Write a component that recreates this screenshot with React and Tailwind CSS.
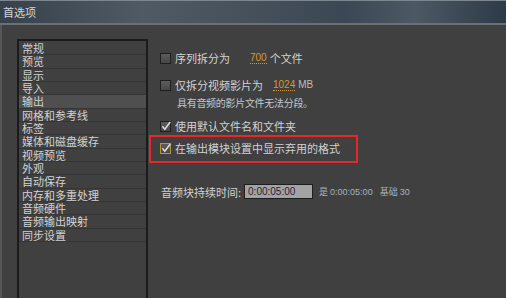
import React from "react";

const items = [
  "常规",
  "预览",
  "显示",
  "导入",
  "输出",
  "网格和参考线",
  "标签",
  "媒体和磁盘缓存",
  "视频预览",
  "外观",
  "自动保存",
  "内存和多重处理",
  "音频硬件",
  "音频输出映射",
  "同步设置",
];

function CheckBox({ checked, gold }) {
  return (
    <span
      className={
        "relative flex w-[11px] h-[11px] shrink-0 border bg-[linear-gradient(180deg,#5c5c5c,#474747)] " +
        (gold ? "border-[#b8943a]" : "border-[#1f1f1f]")
      }
    >
      {checked && (
        <svg viewBox="0 0 11 11" className="absolute -left-px -top-[2px] w-[12px] h-[12px]">
          <path d="M2.2 5.8 L4.4 8.4 L9.4 1.8" fill="none" stroke="#dcdcdc" strokeWidth="1.4" />
        </svg>
      )}
    </span>
  );
}

export default function App() {
  return (
    <div className="w-[506px] h-[298px] overflow-hidden flex flex-col bg-[#404040] text-[#d2d2d2] font-['Noto_Sans_CJK_SC','Noto_Sans',sans-serif]">
      {/* title bar */}
      <div className="h-[23px] shrink-0 flex items-center pl-[3px] border-t border-[#7d868e] bg-[linear-gradient(90deg,#36414c_0%,#4f5a65_28%,#45505b_50%,#3b4754_68%,#4c5864_82%,#2d3a47_100%)]">
        <span className="text-[11px] leading-[12px] text-[#cfd5da]">首选项</span>
      </div>
      <div className="h-[2px] shrink-0 bg-[#6b7075]" />

      <div className="flex flex-1 min-h-0">
        <div className="w-[2px] shrink-0 bg-[#575757]" />
        <div className="flex items-start pl-[15px] pt-[14px]">
          {/* category list */}
          <div className="w-[131px] h-[300px] border-2 border-b-0 border-[#1b1b1b] pt-[1px]">
            {items.map((name, i) => (
              <div
                key={name}
                className={
                  "h-[13.33px] pl-[3px] border-b border-[#353535] text-[11px] leading-[12px] whitespace-nowrap " +
                  (i === 4 ? "bg-[#4f4f4f]" : "")
                }
              >
                {name}
              </div>
            ))}
          </div>

          {/* settings */}
          <div className="flex flex-col ml-px text-[11px] leading-[12px]">
            <div className="flex items-center h-[12px] mt-[13px] pl-[11px]">
              <CheckBox />
              <span className="ml-[4px]">序列拆分为</span>
              <span className="ml-[20px] text-[10px] text-[#d49b2c] border-b border-dotted border-[#d49b2c] leading-[11px] font-['Liberation_Sans',sans-serif]">
                700
              </span>
              <span className="ml-[3px]">个文件</span>
            </div>

            <div className="flex items-center h-[12px] mt-[15px] pl-[11px]">
              <CheckBox />
              <span className="ml-[4px]">仅拆分视频影片为</span>
              <span className="ml-[10px] text-[10px] text-[#d49b2c] border-b border-dotted border-[#d49b2c] leading-[11px] font-['Liberation_Sans',sans-serif]">
                1024
              </span>
              <span className="ml-[3px] text-[10px] text-[#bdbdbd] font-['Liberation_Sans',sans-serif]">MB</span>
            </div>

            <div className="h-[12px] mt-[6px] pl-[28px] text-[10px] leading-[12px] tracking-[-0.3px] text-[#c4c8cc]">
              具有音频的影片文件无法分段。
            </div>

            <div className="flex items-center h-[12px] mt-[11px] pl-[11px]">
              <CheckBox checked />
              <span className="ml-[4px]">使用默认文件名和文件夹</span>
            </div>

            <div className="flex items-center w-[209px] h-[28px] mt-[3px] pl-[9px] pb-[2px] border-2 border-[#e8262c]">
              <CheckBox checked gold />
              <span className="ml-[4px]">在输出模块设置中显示弃用的格式</span>
            </div>

            <div className="flex items-center h-[15px] mt-[21px] pl-[12px]">
              <span>音频块持续时间:</span>
              <span className="ml-[3px] w-[69px] h-[15px] flex items-center pl-[3px] bg-[#a3a3a3] border border-[#1e1e1e] text-[10px] text-[#23233a] font-['Liberation_Sans',sans-serif]">
                0:00:05:00
              </span>
              <span className="ml-[6px] text-[9px] text-[#aab2ba] whitespace-nowrap">
                是 <span className="font-['Liberation_Sans',sans-serif]">0:00:05:00</span>
              </span>
              <span className="ml-[7px] text-[9px] text-[#aab2ba] whitespace-nowrap">
                基础 <span className="font-['Liberation_Sans',sans-serif]">30</span>
              </span>
            </div>
          </div>
        </div>
      </div>
    </div>
  );
}
